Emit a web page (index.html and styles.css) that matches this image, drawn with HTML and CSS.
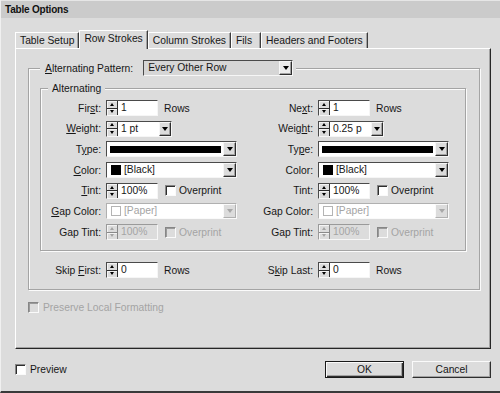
FILE: index.html
```html
<!DOCTYPE html>
<html>
<head>
<meta charset="utf-8">
<title>Table Options</title>
<link rel="stylesheet" href="styles.css">
</head>
<body>
<div class="window">
  <div class="titlebar">Table Options</div>

  <div class="tabs">
    <div class="tab">Table Setup</div>
    <div class="tab selected">Row Strokes</div>
    <div class="tab">Column Strokes</div>
    <div class="tab tab-wide">Fils</div>
    <div class="tab">Headers and Footers</div>
  </div>

  <div class="panel">
    <div class="group outer">
      <div class="group-title pattern-legend">
        <span class="pattern-label"><u>A</u>lternating Pattern:</span>
        <span class="select pattern">
          <span class="sel-content">Every Other Row</span>
          <span class="arrow"></span>
        </span>
      </div>

      <div class="group inner">
        <div class="group-title inner-legend">Alternating</div>
        <div class="grid rows">
          <!-- row 1 -->
          <div class="field">
            <span class="label">Fir<u>s</u>t:</span>
            <span class="num"><span class="spin"><span class="up"></span><span class="down"></span></span><span class="val">1</span></span>
            <span class="after">Rows</span>
          </div>
          <div class="field">
            <span class="label">Ne<u>x</u>t:</span>
            <span class="num"><span class="spin"><span class="up"></span><span class="down"></span></span><span class="val">1</span></span>
            <span class="after">Rows</span>
          </div>
          <!-- row 2 -->
          <div class="field">
            <span class="label"><u>W</u>eight:</span>
            <span class="num wt"><span class="spin"><span class="up"></span><span class="down"></span></span><span class="val">1 pt</span><span class="arrow small"></span></span>
          </div>
          <div class="field">
            <span class="label">Weig<u>h</u>t:</span>
            <span class="num wt"><span class="spin"><span class="up"></span><span class="down"></span></span><span class="val">0.25 p</span><span class="arrow small"></span></span>
          </div>
          <!-- row 3 -->
          <div class="field">
            <span class="label">T<u>y</u>pe:</span>
            <span class="select"><span class="sel-content"><span class="stroke"></span></span><span class="arrow"></span></span>
          </div>
          <div class="field">
            <span class="label">Ty<u>p</u>e:</span>
            <span class="select"><span class="sel-content"><span class="stroke"></span></span><span class="arrow"></span></span>
          </div>
          <!-- row 4 -->
          <div class="field">
            <span class="label"><u>C</u>olor:</span>
            <span class="select"><span class="sel-content"><span class="swatch"></span>[Black]</span><span class="arrow"></span></span>
          </div>
          <div class="field">
            <span class="label">Color:</span>
            <span class="select"><span class="sel-content"><span class="swatch"></span>[Black]</span><span class="arrow"></span></span>
          </div>
          <!-- row 5 -->
          <div class="field">
            <span class="label"><u>T</u>int:</span>
            <span class="num"><span class="spin"><span class="up"></span><span class="down"></span></span><span class="val">100%</span></span>
            <span class="cb"></span><span class="cb-label">Overprint</span>
          </div>
          <div class="field">
            <span class="label">Tint:</span>
            <span class="num"><span class="spin"><span class="up"></span><span class="down"></span></span><span class="val">100%</span></span>
            <span class="cb"></span><span class="cb-label">Overprint</span>
          </div>
          <!-- row 6 -->
          <div class="field">
            <span class="label"><u>G</u>ap Color:</span>
            <span class="select disabled"><span class="sel-content"><span class="swatch empty"></span>[Paper]</span><span class="arrow"></span></span>
          </div>
          <div class="field">
            <span class="label">Gap Color:</span>
            <span class="select disabled"><span class="sel-content"><span class="swatch empty"></span>[Paper]</span><span class="arrow"></span></span>
          </div>
          <!-- row 7 -->
          <div class="field">
            <span class="label">Gap Tint:</span>
            <span class="num disabled"><span class="spin"><span class="up"></span><span class="down"></span></span><span class="val">100%</span></span>
            <span class="cb disabled"></span><span class="cb-label disabled">Overprint</span>
          </div>
          <div class="field">
            <span class="label">Gap Tint:</span>
            <span class="num disabled"><span class="spin"><span class="up"></span><span class="down"></span></span><span class="val">100%</span></span>
            <span class="cb disabled"></span><span class="cb-label disabled">Overprint</span>
          </div>
        </div>
      </div>

      <div class="grid skip">
        <div class="field">
          <span class="label">Skip <u>F</u>irst:</span>
          <span class="num"><span class="spin"><span class="up"></span><span class="down"></span></span><span class="val">0</span></span>
          <span class="after">Rows</span>
        </div>
        <div class="field">
          <span class="label">S<u>k</u>ip Last:</span>
          <span class="num"><span class="spin"><span class="up"></span><span class="down"></span></span><span class="val">0</span></span>
          <span class="after">Rows</span>
        </div>
      </div>
    </div>

    <div class="check-row preserve">
      <span class="cb disabled"></span><span class="cb-label disabled">Preserve Local Formatting</span>
    </div>
  </div>

  <div class="footer">
    <div class="check-row">
      <span class="cb"></span><span class="cb-label">Preview</span>
    </div>
    <div class="buttons">
      <button class="btn default">OK</button>
      <button class="btn">Cancel</button>
    </div>
  </div>
</div>
</body>
</html>
```

FILE: styles.css
```css
* {
  box-sizing: border-box;
}

html,
body {
  margin: 0;
  padding: 0;
}

body {
  width: 500px;
  height: 393px;
  overflow: hidden;
  background: #dcdcdc;
  font-family: "Liberation Sans", Arial, sans-serif;
  font-size: 10.3px;
  line-height: 13px;
  color: #161616;
}

.window {
  width: 500px;
  height: 393px;
  display: flex;
  flex-direction: column;
  background: #dcdcdc;
  border-left: 1px solid #f0f0f0;
  border-bottom: 2px solid #3a3a3a;
}

/* ---------- title bar ---------- */
.titlebar {
  height: 18px;
  flex: none;
  background: #cbcbcb;
  border-top: 1px solid #e6e6e6;
  padding: 1px 0 0 4px;
  font-weight: bold;
  font-size: 10px;
  letter-spacing: -0.2px;
  line-height: 16px;
  color: #111;
}

/* ---------- tabs ---------- */
.tabs {
  display: flex;
  align-items: flex-end;
  flex: none;
  height: 18px;
  margin: 12px 0 0 14px;
}

.tab {
  height: 16px;
  padding: 0 4px;
  border-top: 1px solid #fff;
  border-left: 1px solid #fff;
  border-right: 1px solid #3c3c3c;
  box-shadow: inset -1px 0 0 #a2a2a2;
  line-height: 15px;
  white-space: nowrap;
}

.tab-wide {
  padding-right: 8px;
}

.tab.selected {
  height: 19px;
  margin-bottom: -1px;
  position: relative;
  background: #dcdcdc;
  line-height: 16px;
}

/* ---------- panel ---------- */
.panel {
  flex: none;
  width: 476px;
  height: 301px;
  margin-left: 14px;
  border-top: 1px solid #fff;
  border-left: 1px solid #fff;
  border-right: 1px solid #262626;
  border-bottom: 1px solid #262626;
  box-shadow: inset -1px -1px 0 #a2a2a2;
  padding: 19px 10px 0 12px;
}

/* ---------- group boxes ---------- */
.group {
  border: 1px solid #a4a4a4;
  box-shadow: 1px 1px 0 #fbfbfb, inset 1px 1px 0 #fbfbfb;
}

.group-title {
  display: flex;
  align-items: center;
  width: fit-content;
  background: #dcdcdc;
  white-space: nowrap;
}

.pattern-legend {
  height: 16px;
  margin: -9px 0 0 11px;
  padding: 0 3px 0 5px;
}

.inner {
  width: 426px;
  margin: 12px 0 0 11px;
}

.inner-legend {
  height: 13px;
  margin: -7px 0 0 7px;
  padding: 0 4px;
}

.rows {
  padding: 5px 0 10px 0;
}

/* ---------- field grid ---------- */
.grid {
  display: grid;
  grid-template-columns: 212px 212px;
  row-gap: 4.7px;
}

.skip {
  margin: 11px 0 11px 12px;
}

.field {
  display: flex;
  align-items: center;
  height: 16px;
  white-space: nowrap;
}

.field > .label {
  flex: none;
  width: 60px;
  margin-right: 5px;
  text-align: right;
}

.after {
  margin-left: 6px;
}

/* ---------- numeric spinner box ---------- */
.num {
  display: flex;
  flex: none;
  width: 52px;
  height: 16px;
  border-top: 1px solid #4a4a4a;
  border-left: 1px solid #4a4a4a;
  border-right: 1px solid #f6f6f6;
  border-bottom: 1px solid #f6f6f6;
  background: #fff;
}

.num.wt {
  width: 66px;
}

.num.wt .val {
  margin-right: 5px;
}

.spin {
  flex: none;
  width: 11px;
  display: flex;
  flex-direction: column;
  background: #dcdcdc;
  border-right: 1px solid #2e2e2e;
}

.spin > span {
  flex: 1;
  display: flex;
  align-items: center;
  justify-content: center;
  box-shadow: inset 1px 1px 0 #f4f4f4;
}

.spin > span + span {
  border-top: 1px solid #2e2e2e;
}

.spin .up::before {
  content: "";
  border-left: 2.5px solid transparent;
  border-right: 2.5px solid transparent;
  border-bottom: 3px solid #000;
}

.spin .down::before {
  content: "";
  border-left: 2.5px solid transparent;
  border-right: 2.5px solid transparent;
  border-top: 3px solid #000;
}

.val {
  flex: 1;
  min-width: 0;
  overflow: hidden;
  white-space: nowrap;
  padding-left: 3px;
  line-height: 14px;
  background: #fff;
}

/* ---------- dropdown arrow button ---------- */
.arrow {
  flex: none;
  width: 13px;
  height: 14px;
  display: flex;
  align-items: center;
  justify-content: center;
  background: #dcdcdc;
  border: 1px solid;
  border-color: #f6f6f6 #2e2e2e #2e2e2e #f6f6f6;
  box-shadow: inset -1px -1px 0 #a2a2a2;
}

.arrow::before {
  content: "";
  border-left: 3.5px solid transparent;
  border-right: 3.5px solid transparent;
  border-top: 4px solid #000;
}

.arrow.small {
  width: 12px;
  margin-left: 1px;
}

/* ---------- select ---------- */
.select {
  display: flex;
  align-items: center;
  flex: none;
  width: 131px;
  height: 16px;
  border-top: 1px solid #4a4a4a;
  border-left: 1px solid #4a4a4a;
  border-right: 1px solid #f6f6f6;
  border-bottom: 1px solid #f6f6f6;
  background: #fff;
}

.select.pattern {
  width: 150px;
  margin-left: 10px;
  background: #d6d6d6;
}

.select.pattern .arrow {
  background: #ececec;
}

.sel-content {
  flex: 1;
  min-width: 0;
  display: flex;
  align-items: center;
  padding-left: 4px;
  line-height: 14px;
  overflow: hidden;
  white-space: nowrap;
}

.stroke {
  flex: 1;
  height: 7px;
  margin: 0 2px 0 -1px;
  background: #000;
}

.swatch {
  flex: none;
  width: 10px;
  height: 10px;
  margin-right: 3px;
  background: #000;
}

.swatch.empty {
  background: #fff;
  border: 1px solid #b4b4b4;
}

.select.disabled {
  border-color: #b0b0b0 #fafafa #fafafa #b0b0b0;
  color: #a4a4a4;
}

.select.disabled .arrow {
  border-color: #fafafa #b0b0b0 #b0b0b0 #fafafa;
  box-shadow: none;
}

.select.disabled .arrow::before {
  border-top-color: #a8a8a8;
}

.num.disabled {
  border-color: #9a9a9a #f6f6f6 #f6f6f6 #9a9a9a;
}

.num.disabled .val {
  background: #dcdcdc;
  color: #a4a4a4;
}

.num.disabled .spin {
  border-right-color: #8a8a8a;
}

.num.disabled .spin > span + span {
  border-top-color: #8a8a8a;
}

.num.disabled .spin .up::before {
  border-bottom-color: #a4a4a4;
}

.num.disabled .spin .down::before {
  border-top-color: #a4a4a4;
}

/* ---------- checkbox ---------- */
.cb {
  flex: none;
  display: inline-block;
  width: 11px;
  height: 11px;
  margin-left: 7px;
  border: 1px solid;
  border-color: #868686 #fafafa #fafafa #868686;
  box-shadow: inset 1px 1px 0 #2e2e2e;
  background: #fff;
}

.cb.disabled {
  background: #dcdcdc;
  box-shadow: inset 1px 1px 0 #9a9a9a;
}

.cb-label {
  margin-left: 3px;
}

.disabled {
  color: #a4a4a4;
}

.check-row {
  display: flex;
  align-items: center;
  height: 13px;
  white-space: nowrap;
}

.check-row .cb {
  margin-left: 0;
}

.preserve {
  margin-top: 11px;
}

.preserve .cb-label {
  margin-left: 4px;
}

/* ---------- footer ---------- */
.footer {
  flex: none;
  display: flex;
  align-items: center;
  justify-content: space-between;
  height: 17px;
  margin-top: 12px;
  padding: 0 9px 0 14px;
}

.footer .cb-label {
  margin-left: 4px;
}

.buttons {
  display: flex;
  gap: 8px;
}

.btn {
  width: 79px;
  height: 17px;
  padding: 0;
  font: inherit;
  line-height: 13px;
  color: inherit;
  background: #dcdcdc;
  border: 1px solid;
  border-color: #fafafa #2e2e2e #2e2e2e #fafafa;
  box-shadow: inset -1px -1px 0 #a2a2a2;
}

.btn.default {
  border: 1px solid #1a1a1a;
  box-shadow: inset 1px 1px 0 #fafafa, inset -1px -1px 0 #2e2e2e, inset -2px -2px 0 #a2a2a2;
}
```
